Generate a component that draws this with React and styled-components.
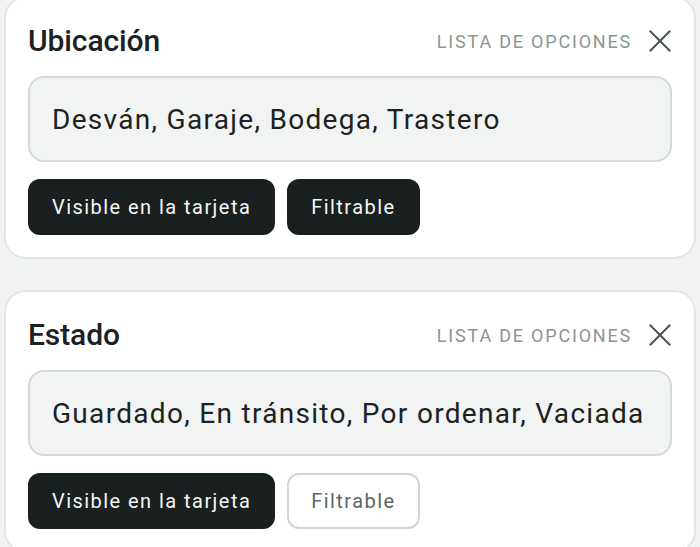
import React from "react";
import styled, { createGlobalStyle } from "styled-components";

const Global = createGlobalStyle`
  html, body { margin: 0; padding: 0; background: #f1f3f2; }
  body { font-family: Roboto, "Noto Sans", sans-serif; overflow: hidden; }
`;

const Page = styled.div`
  display: flex;
  flex-direction: column;
  gap: 31px;
  margin-top: -4px;
  padding: 0 4px;
`;

const Card = styled.section`
  background: #ffffff;
  border: 2px solid #e2e6e4;
  border-radius: 22px;
  padding: 26px 22px 22px;
  display: flex;
  flex-direction: column;
`;

const Header = styled.div`
  display: flex;
  align-items: center;
  justify-content: space-between;
  height: 34px;
`;

const Title = styled.h2`
  margin: 0;
  font-size: 30px;
  line-height: 34px;
  font-weight: 500;
  letter-spacing: -0.1px;
  color: #1b2120;
`;

const HeaderRight = styled.div`
  display: flex;
  align-items: center;
  gap: 16px;
`;

const TypeLabel = styled.span`
  font-size: 18px;
  letter-spacing: 1.8px;
  color: #8a9692;
  text-transform: uppercase;
`;

const CloseBtn = styled.button`
  border: 0;
  background: none;
  padding: 0;
  width: 24px;
  height: 24px;
  display: flex;
  align-items: center;
  justify-content: center;
  color: #4b5451;
`;

const OptionsBox = styled.div`
  margin-top: 18px;
  height: 86px;
  box-sizing: border-box;
  border: 2px solid #d3dad7;
  border-radius: 16px;
  background: #f2f4f3;
  display: flex;
  align-items: center;
  padding: 0 22px;
  font-size: 28px;
  letter-spacing: 1.3px;
  color: #1c2220;
  white-space: nowrap;
`;

const Toggles = styled.div`
  display: flex;
  gap: 12px;
  margin-top: 17px;
`;

const Toggle = styled.button`
  height: 56px;
  box-sizing: border-box;
  padding: 0 22px;
  border-radius: 12px;
  font-family: Roboto, "Noto Sans", sans-serif;
  font-size: 20px;
  letter-spacing: 1.45px;
  border: 2px solid ${(p) => (p.$on ? "#1a201f" : "#cfd6d3")};
  background: ${(p) => (p.$on ? "#1a201f" : "#ffffff")};
  color: ${(p) => (p.$on ? "#f4f6f5" : "#5d6764")};
`;

const CloseIcon = () => (
  <svg width="22" height="22" viewBox="0 0 22 22" fill="none" stroke="currentColor" strokeWidth="2" strokeLinecap="square">
    <path d="M1.5 1.5 L20.5 20.5 M20.5 1.5 L1.5 20.5" />
  </svg>
);

const fields = [
  { name: "Ubicación", options: "Desván, Garaje, Bodega, Trastero", visible: true, filter: true },
  { name: "Estado", options: "Guardado, En tránsito, Por ordenar, Vaciada", visible: true, filter: false },
];

export default function App() {
  return (
    <>
      <Global />
      <Page>
        {fields.map((f) => (
          <Card key={f.name}>
            <Header>
              <Title>{f.name}</Title>
              <HeaderRight>
                <TypeLabel>Lista de opciones</TypeLabel>
                <CloseBtn aria-label="Eliminar"><CloseIcon /></CloseBtn>
              </HeaderRight>
            </Header>
            <OptionsBox>{f.options}</OptionsBox>
            <Toggles>
              <Toggle $on={f.visible}>Visible en la tarjeta</Toggle>
              <Toggle $on={f.filter}>Filtrable</Toggle>
            </Toggles>
          </Card>
        ))}
      </Page>
    </>
  );
}
